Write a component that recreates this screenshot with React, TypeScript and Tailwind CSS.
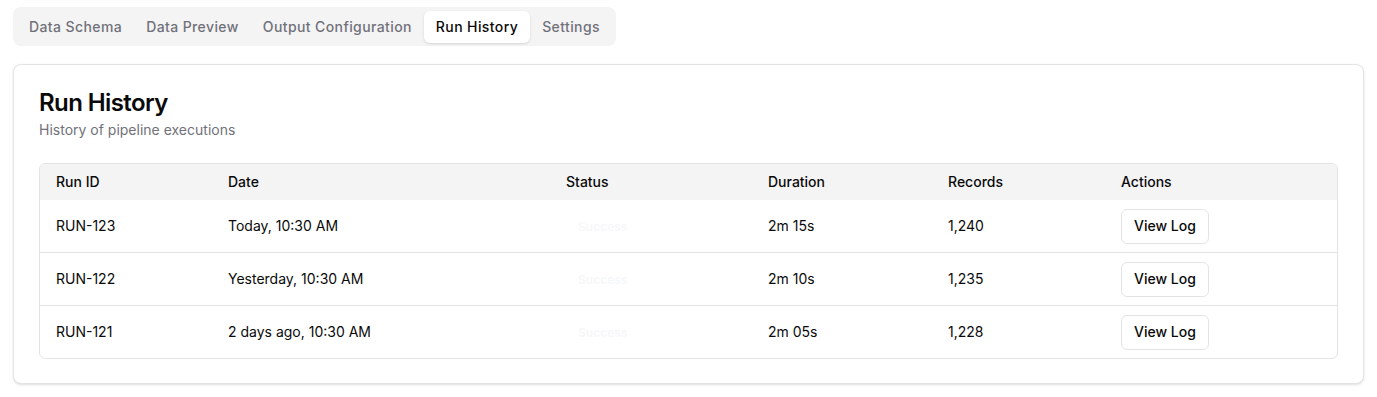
import { useState } from "react";

const tabs = ["Data Schema", "Data Preview", "Output Configuration", "Run History", "Settings"];

const runs = [
  { id: "RUN-123", date: "Today, 10:30 AM", status: "Success", duration: "2m 15s", records: "1,240" },
  { id: "RUN-122", date: "Yesterday, 10:30 AM", status: "Success", duration: "2m 10s", records: "1,235" },
  { id: "RUN-121", date: "2 days ago, 10:30 AM", status: "Success", duration: "2m 05s", records: "1,228" },
];

const cols = "grid grid-cols-[172px_338px_202px_180px_173px_1fr]";

export default function App() {
  const [active, setActive] = useState("Run History");

  return (
    <div className="min-h-screen bg-white px-[13px] pt-[7px] text-[#0a0a0a] font-['Inter',sans-serif]">
      <div className="inline-flex h-[39px] items-center rounded-lg bg-[#f4f4f5] p-1">
        {tabs.map((t) => (
          <button
            key={t}
            onClick={() => setActive(t)}
            className={
              active === t
                ? "h-[32px] rounded-md bg-white px-3 text-sm font-medium tracking-[0.4px] text-[#0a0a0a] shadow-sm"
                : "h-[32px] rounded-md px-3 text-sm font-medium tracking-[0.4px] text-[#71717a]"
            }
          >
            {t}
          </button>
        ))}
      </div>

      <div className="mt-[18px] rounded-lg border border-[#e4e4e7] bg-white px-[25px] pb-6 pt-[22px] shadow-sm">
        <h2 className="text-2xl font-semibold leading-8 tracking-tight">Run History</h2>
        <p className="mt-[1px] text-sm text-[#71717a]">History of pipeline executions</p>

        <div className="mt-[23px] overflow-hidden rounded-md border border-[#e4e4e7]">
          <div className={`${cols} h-[36px] items-center bg-[#f4f4f5] text-sm font-medium`}>
            <div className="px-4">Run ID</div>
            <div className="px-4">Date</div>
            <div className="px-4">Status</div>
            <div className="px-4">Duration</div>
            <div className="px-4">Records</div>
            <div className="px-4">Actions</div>
          </div>
          {runs.map((r, i) => (
            <div
              key={r.id}
              className={`${cols} h-[52px] items-center text-sm ${i < runs.length - 1 ? "box-content border-b border-[#e4e4e7]" : ""}`}
            >
              <div className="px-4">{r.id}</div>
              <div className="px-4">{r.date}</div>
              <div className="px-4">
                <span className="rounded-full px-3 py-0.5 text-xs font-semibold text-[#f6f7f9]">{r.status}</span>
              </div>
              <div className="px-4">{r.duration}</div>
              <div className="px-4">{r.records}</div>
              <div className="px-4">
                <button className="h-[35px] rounded-md border border-[#e4e4e7] bg-white px-3 text-sm font-medium">
                  View Log
                </button>
              </div>
            </div>
          ))}
        </div>
      </div>
    </div>
  );
}
